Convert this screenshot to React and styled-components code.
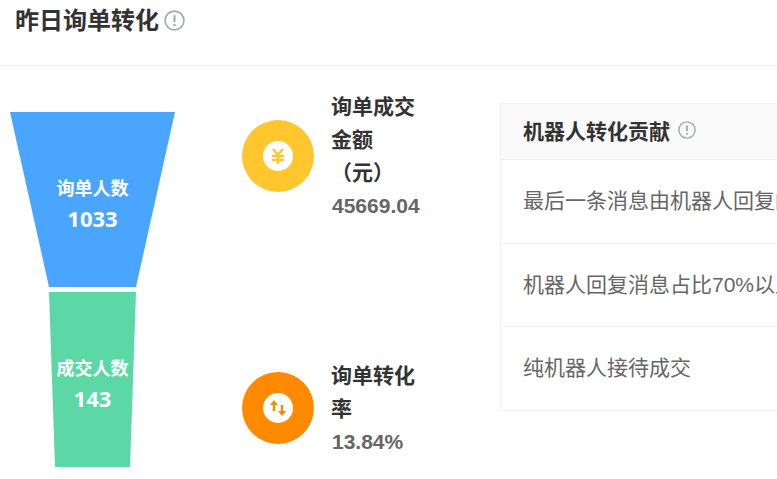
import React from "react";
import styled, { createGlobalStyle } from "styled-components";

const Global = createGlobalStyle`
  html, body { margin: 0; padding: 0; background: #fff; }
  body { font-family: "Liberation Sans", "Noto Sans CJK SC", sans-serif; }
`;

const Page = styled.div`
  width: 777px;
  height: 479px;
  overflow: hidden;
  display: flex;
  flex-direction: column;
`;

const Header = styled.header`
  height: 66px;
  flex: none;
  box-sizing: border-box;
  padding: 5px 0 0 15px;
  display: flex;
  align-items: flex-start;
  gap: 5px;
  border-bottom: 1px solid #eeeeee;
`;

const Title = styled.h1`
  margin: 0;
  font-size: 24px;
  line-height: 32px;
  font-weight: 700;
  color: #333;
`;

const HintIcon = styled.svg`
  flex: none;
  width: ${(p) => p.$size}px;
  height: ${(p) => p.$size}px;
  margin-top: ${(p) => p.$top}px;
`;

const Body = styled.main`
  flex: 1;
  display: flex;
  align-items: flex-start;
`;

const Funnel = styled.svg`
  flex: none;
  width: 242px;
  height: 413px;
`;

const FunnelLabel = styled.text`
  fill: #fff;
  font-size: 18px;
  font-weight: 700;
  text-anchor: middle;
  font-family: "Noto Sans CJK SC", sans-serif;
`;

const FunnelValue = styled.text`
  fill: #fff;
  font-size: 22px;
  font-weight: 700;
  text-anchor: middle;
  font-family: "Noto Sans", sans-serif;
`;

const Metrics = styled.section`
  flex: none;
  width: 258px;
  height: 413px;
  box-sizing: border-box;
  padding-top: 24px;
  display: flex;
  flex-direction: column;
  gap: 137px;
`;

const Metric = styled.div`
  display: flex;
  align-items: center;
  gap: 18px;
`;

const Badge = styled.div`
  flex: none;
  width: 72px;
  height: 72px;
  margin-bottom: ${(p) => p.$lift || 0}px;
  border-radius: 50%;
  background: ${(p) => p.$color};
  display: flex;
  align-items: center;
  justify-content: center;
`;

const BadgeInner = styled.div`
  width: 30px;
  height: 30px;
  border-radius: 50%;
  background: #fff;
  display: flex;
  align-items: center;
  justify-content: center;
`;

const MetricText = styled.div`
  width: 88px;
`;

const MetricName = styled.div`
  margin-left: -1px;
  font-size: 21px;
  line-height: 33px;
  font-weight: 700;
  color: #333;
`;

const MetricValue = styled.div`
  font-size: 21px;
  line-height: 33px;
  font-weight: 700;
  color: #666;
  white-space: nowrap;
`;

const Table = styled.section`
  flex: none;
  width: 340px;
  margin-top: 37px;
  border: 1px solid #f0f0f0;
  border-right: 0;
`;

const TableHead = styled.div`
  height: 55px;
  box-sizing: border-box;
  padding: 0 0 4px 22px;
  background: #fafafa;
  display: flex;
  align-items: center;
  gap: 8px;
  font-size: 21px;
  font-weight: 700;
  color: #333;
  white-space: nowrap;
`;

const Row = styled.div`
  height: 83.5px;
  box-sizing: border-box;
  padding: 0 0 4px 22px;
  display: flex;
  align-items: center;
  border-top: 1px solid #f0f0f0;
  font-size: 21px;
  color: #666;
  white-space: nowrap;
  overflow: hidden;
`;

const Hint = ({ size, top }) => (
  <HintIcon $size={size} $top={top} viewBox="0 0 20 20" fill="none">
    <circle cx="10" cy="10" r="9" stroke="#a3abab" strokeWidth="1.6" />
    <path d="M10 5v6.5" stroke="#a3abab" strokeWidth="2" />
    <circle cx="10" cy="14.3" r="1.2" fill="#a3abab" />
  </HintIcon>
);

export default function App() {
  return (
    <Page>
      <Global />
      <Header>
        <Title>昨日询单转化</Title>
        <Hint size={21} top={5} />
      </Header>
      <Body>
        <Funnel viewBox="0 0 242 413">
          <polygon points="10,46 175,46 136,221 49,221" fill="#4aa5ff" />
          <polygon points="49,226 136,226 130,401 55,401" fill="#5bd8a6" />
          <FunnelLabel x="92.5" y="129">询单人数</FunnelLabel>
          <FunnelValue x="92.5" y="161">1033</FunnelValue>
          <FunnelLabel x="92.5" y="309">成交人数</FunnelLabel>
          <FunnelValue x="92.5" y="341">143</FunnelValue>
        </Funnel>
        <Metrics>
          <Metric>
            <Badge $color="#ffc62e">
              <BadgeInner>
                <svg width="16" height="18" viewBox="0 0 16 18" fill="none" stroke="#ffc62e" strokeWidth="2.4">
                  <path d="M3 2l5 6 5-6M2 9h12M2 13h12M8 8v9" />
                </svg>
              </BadgeInner>
            </Badge>
            <MetricText>
              <MetricName>询单成交金额（元）</MetricName>
              <MetricValue>45669.04</MetricValue>
            </MetricText>
          </Metric>
          <Metric>
            <Badge $color="#ff8a00" $lift={2}>
              <BadgeInner>
                <svg width="18" height="20" viewBox="0 0 18 20" fill="#ff8a00">
                  <path d="M5 2l4 5H6.2v6H3.8V7H1zM11.8 7h2.4v6H17l-4 5-4-5h2.8z" />
                </svg>
              </BadgeInner>
            </Badge>
            <MetricText>
              <MetricName>询单转化率</MetricName>
              <MetricValue>13.84%</MetricValue>
            </MetricText>
          </Metric>
        </Metrics>
        <Table>
          <TableHead>
            机器人转化贡献
            <Hint size={18} top={0} />
          </TableHead>
          <Row>最后一条消息由机器人回复的成交</Row>
          <Row>机器人回复消息占比70%以上成交</Row>
          <Row>纯机器人接待成交</Row>
        </Table>
      </Body>
    </Page>
  );
}
